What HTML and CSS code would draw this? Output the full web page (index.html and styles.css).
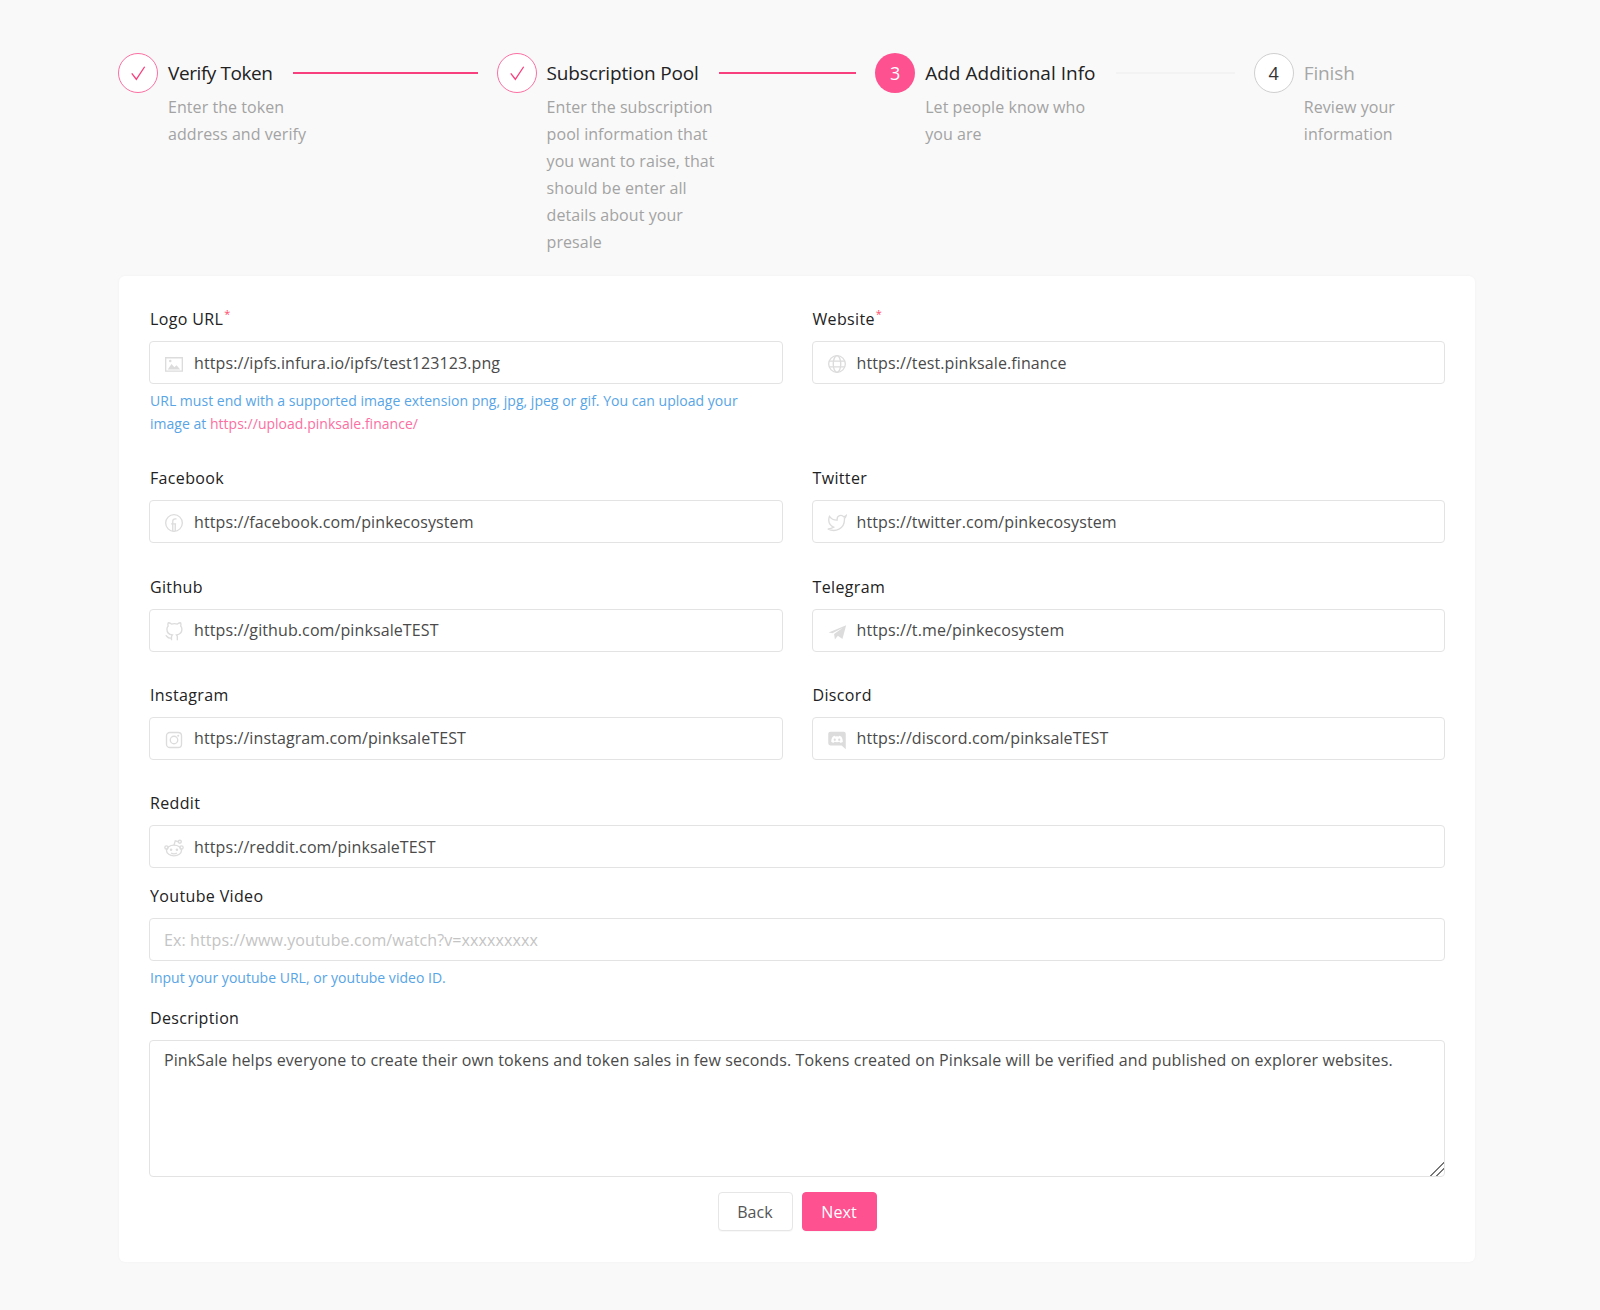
FILE: index.html
```html
<!DOCTYPE html>
<html lang="en">
<head>
<meta charset="utf-8">
<title>Add Additional Info</title>
<link rel="stylesheet" href="styles.css">
</head>
<body>
<main class="page">
  <ol class="steps">
    <li class="step">
      <span class="dot dot-done"><svg viewBox="0 0 24 24" class="check"><path d="M4.5 12.5 10 19.5 20 4.5"/></svg></span>
      <div class="step-body">
        <div class="step-head"><span class="step-title title-tight">Verify Token</span><span class="step-line on"></span></div>
        <p class="step-desc">Enter the token<br>address and verify</p>
      </div>
    </li>
    <li class="step">
      <span class="dot dot-done"><svg viewBox="0 0 24 24" class="check"><path d="M4.5 12.5 10 19.5 20 4.5"/></svg></span>
      <div class="step-body">
        <div class="step-head"><span class="step-title">Subscription Pool</span><span class="step-line on"></span></div>
        <p class="step-desc">Enter the subscription<br>pool information that<br>you want to raise, that<br>should be enter all<br>details about your<br>presale</p>
      </div>
    </li>
    <li class="step">
      <span class="dot dot-active">3</span>
      <div class="step-body">
        <div class="step-head"><span class="step-title title-wide">Add Additional Info</span><span class="step-line"></span></div>
        <p class="step-desc">Let people know who<br>you are</p>
      </div>
    </li>
    <li class="step step-last">
      <span class="dot dot-wait">4</span>
      <div class="step-body">
        <div class="step-head"><span class="step-title muted">Finish</span></div>
        <p class="step-desc">Review your<br>information</p>
      </div>
    </li>
  </ol>

  <form class="card">
    <div class="grid">
      <div class="field">
        <label class="label">Logo URL<sup class="req">*</sup></label>
        <div class="input-wrap">
          <svg class="ico" viewBox="0 0 24 24"><path class="ln" d="M2 4.5h20v16H2z"/><path class="fl" d="M4.5 18.5 9 12l3.5 4 2.500-2.500 4.500 5z"/><circle class="fl" cx="7.500" cy="8.500" r="1.500"/></svg>
          <input class="input" value="https://ipfs.infura.io/ipfs/test123123.png">
        </div>
        <p class="help">URL must end with a supported image extension png, jpg, jpeg or gif. You can upload your image at <a class="link" href="#">https://upload.pinksale.finance/</a></p>
      </div>
      <div class="field">
        <label class="label">Website<sup class="req">*</sup></label>
        <div class="input-wrap">
          <svg class="ico" viewBox="0 0 24 24"><g class="ln"><circle cx="12" cy="12" r="10"/><ellipse cx="12" cy="12" rx="4.500" ry="10"/><path d="M2.500 8.500h19M2.500 15.500h19"/></g></svg>
          <input class="input" value="https://test.pinksale.finance">
        </div>
      </div>
      <div class="field">
        <label class="label">Facebook</label>
        <div class="input-wrap">
          <svg class="ico" viewBox="0 0 24 24"><g class="ln"><circle cx="12" cy="12" r="10"/><path d="M10.500 22v-9H8.500M10.500 13v-3c0-2 1-3 3-3h1.500M10.500 13h4M13.500 13v8.500"/></g></svg>
          <input class="input" value="https://facebook.com/pinkecosystem">
        </div>
      </div>
      <div class="field">
        <label class="label">Twitter</label>
        <div class="input-wrap">
          <svg class="ico" viewBox="0 0 24 24"><path class="ln" d="M23 3a10.900 10.900 0 0 1-3 1.530 4.480 4.480 0 0 0-7.860 3v1A10.660 10.660 0 0 1 3 4s-4 9 5 13a11.640 11.640 0 0 1-7 2c9 5 20 0 20-11.500a4.500 4.500 0 0 0-.08-.83A7.720 7.720 0 0 0 23 3z"/></svg>
          <input class="input" value="https://twitter.com/pinkecosystem">
        </div>
      </div>
      <div class="field">
        <label class="label">Github</label>
        <div class="input-wrap">
          <svg class="ico" viewBox="0 0 24 24"><path class="ln" d="M9 19c-5 1.500-5-2.500-7-3m14 6v-3.870a3.370 3.370 0 0 0-.94-2.610c3.140-.35 6.440-1.540 6.440-7A5.440 5.440 0 0 0 20 4.770 5.070 5.070 0 0 0 19.910 1S18.730.65 16 2.480a13.380 13.380 0 0 0-7 0C6.270.65 5.090 1 5.090 1A5.070 5.070 0 0 0 5 4.770a5.440 5.440 0 0 0-1.500 3.780c0 5.420 3.300 6.610 6.440 7A3.370 3.370 0 0 0 9 18.130V22"/></svg>
          <input class="input" value="https://github.com/pinksaleTEST">
        </div>
      </div>
      <div class="field">
        <label class="label">Telegram</label>
        <div class="input-wrap">
          <svg class="ico" viewBox="0 0 24 24"><path class="fl" d="M2 12.500 23 4l-4.500 16.500-5.500-4-3.500 4.500-1-6.500L19 7 6.500 13.500z"/></svg>
          <input class="input" value="https://t.me/pinkecosystem">
        </div>
      </div>
      <div class="field">
        <label class="label">Instagram</label>
        <div class="input-wrap">
          <svg class="ico" viewBox="0 0 24 24"><g class="ln"><rect x="3" y="3" width="18" height="18" rx="4"/><circle cx="12" cy="12" r="4.500"/></g><circle class="fl" cx="17" cy="7" r="1.200"/></svg>
          <input class="input" value="https://instagram.com/pinksaleTEST">
        </div>
      </div>
      <div class="field">
        <label class="label">Discord</label>
        <div class="input-wrap">
          <svg class="ico" viewBox="0 0 24 24"><path class="fl" fill-rule="evenodd" d="M4 2h16a2.500 2.500 0 0 1 2.500 2.500V23l-5-4.500H4A2.500 2.500 0 0 1 1.500 16V4.500A2.500 2.500 0 0 1 4 2zM9.500 7C8 7.200 7 7.800 6.500 8.300 5.500 10 5 12 5 14c.8.900 2 1.300 3.200 1.300l.8-1.200c1.900.8 4.100.8 6 0l.8 1.200c1.200 0 2.400-.4 3.200-1.300 0-2-.5-4-1.500-5.700C17 7.800 16 7.200 14.500 7l-.4.800a8 8 0 0 0-4.200 0zM9.300 10.200a1.300 1.400 0 1 1 0 2.800 1.300 1.400 0 0 1 0-2.800zm5.400 0a1.300 1.400 0 1 1 0 2.800 1.300 1.400 0 0 1 0-2.800z"/></svg>
          <input class="input" value="https://discord.com/pinksaleTEST">
        </div>
      </div>
      <div class="field field-wide field-tight">
        <label class="label">Reddit</label>
        <div class="input-wrap">
          <svg class="ico" viewBox="0 0 24 24"><g class="ln"><ellipse cx="12" cy="15" rx="9" ry="6.500"/><circle cx="3" cy="11.500" r="2"/><circle cx="21" cy="11.500" r="2"/><circle cx="19" cy="4.500" r="1.800"/><path d="M12 8.500 13.500 3.500l4 1M8.500 18c2 1.200 5 1.200 7 0"/></g><circle class="fl" cx="8.500" cy="14" r="1.500"/><circle class="fl" cx="15.500" cy="14" r="1.500"/></svg>
          <input class="input" value="https://reddit.com/pinksaleTEST">
        </div>
      </div>
      <div class="field field-wide field-tight">
        <label class="label">Youtube Video</label>
        <div class="input-wrap">
          <input class="input" placeholder="Ex: https://www.youtube.com/watch?v=xxxxxxxxx">
        </div>
        <p class="help help-low">Input your youtube URL, or youtube video ID.</p>
      </div>
      <div class="field field-wide field-tight">
        <label class="label">Description</label>
        <textarea class="area">PinkSale helps everyone to create their own tokens and token sales in few seconds. Tokens created on Pinksale will be verified and published on explorer websites.</textarea>
      </div>
    </div>
    <div class="actions">
      <button type="button" class="btn">Back</button>
      <button type="button" class="btn btn-primary">Next</button>
    </div>
  </form>
</main>
</body>
</html>
```

FILE: styles.css
```css
* { box-sizing: border-box; }

html, body {
  margin: 0;
  background: #f9f9f9;
}

body {
  font-family: "Open Sans", "Noto Sans", sans-serif;
  font-size: 16px;
  color: #222;
  letter-spacing: 0.1px;
}

.page {
  width: 1356px;
  margin: 0 0 0 119px;
  padding-top: 53px;
  min-height: 1310px;
}

/* Steps */
.steps {
  display: flex;
  list-style: none;
  margin: 0 0 0 -1px;
  padding: 0;
  height: 223px;
}

.step {
  display: flex;
  width: 378.6px;
  gap: 10px;
}

.step-last {
  width: 219px;
}

.step-body {
  flex: 1;
}

.step-head {
  display: flex;
  align-items: center;
  height: 40px;
}

.step-title {
  font-size: 19px;
  letter-spacing: -0.15px;
  color: #222;
  white-space: nowrap;
}

.title-tight {
  letter-spacing: -0.42px;
}

.title-wide {
  letter-spacing: 0.02px;
}

.step-title.muted {
  color: #a6a6a6;
}

.step-line {
  flex: 1;
  height: 2px;
  margin: 0 19px 0 20px;
  background: #f3f3f3;
}

.step-line.on {
  background: #f9407f;
}

.step-desc {
  margin: 1px 0 0;
  font-size: 16px;
  line-height: 27px;
  letter-spacing: 0.06px;
  color: #a3a3a3;
}

.dot {
  flex: none;
  display: flex;
  align-items: center;
  justify-content: center;
  width: 40px;
  height: 40px;
  border-radius: 50%;
  font-size: 18px;
}

.dot-done {
  background: #fff;
  border: 1px solid #fb6fa2;
}

.dot-active {
  background: #fd5190;
  color: #fff;
}

.dot-wait {
  background: #fff;
  border: 1px solid #cfcfcf;
  color: #333;
}

.check {
  width: 20px;
  height: 20px;
  fill: none;
  stroke: #f9407f;
  stroke-width: 1.600;
}

/* Card */
.card {
  background: #fff;
  border-radius: 6px;
  padding: 30px 30px 31px;
  box-shadow: 0 0 3px rgba(0, 0, 0, 0.04);
}

.grid {
  display: grid;
  grid-template-columns: 1fr 1fr;
  column-gap: 29px;
}

.field {
  margin-bottom: 30.3px;
  min-width: 0;
}

.field-wide {
  grid-column: 1 / -1;
}

.field-tight {
  margin-bottom: 15px;
}

.label {
  display: block;
  height: 26px;
  margin-bottom: 9px;
  padding-left: 1px;
  line-height: 26px;
  font-size: 16px;
  font-weight: 500;
  letter-spacing: 0.35px;
  color: #222;
}

.req {
  color: #ff4d6a;
  font-size: 11px;
  line-height: 0;
  vertical-align: 7px;
  margin-left: 1px;
}

.input-wrap {
  display: flex;
  align-items: center;
  gap: 10px;
  height: 43px;
  padding: 0 14px;
  background: #fff;
  border: 1px solid #e3e3e3;
  border-radius: 4px;
}

.ico {
  flex: none;
  width: 20px;
  height: 20px;
  margin-top: 3px;
}

.ln {
  fill: none;
  stroke: #dcdcdc;
  stroke-width: 1.600;
}

.fl {
  fill: #dcdcdc;
}

.input {
  flex: 1;
  min-width: 0;
  border: 0;
  outline: 0;
  padding: 0;
  background: transparent;
  font: inherit;
  letter-spacing: inherit;
  color: #4a4a4a;
}

.input::placeholder {
  color: #c4c4c4;
  opacity: 1;
}

.help {
  max-width: 610px;
  margin: 5px 0 0;
  padding-left: 1px;
  font-size: 14px;
  line-height: 23px;
  letter-spacing: 0.02px;
  color: #58a5e6;
}

.help-low {
  margin-bottom: 1px;
}

.link {
  color: #fb6fa2;
  text-decoration: none;
}

.area {
  display: block;
  width: 100%;
  height: 137px;
  padding: 7px 14px;
  background: #fff;
  border: 1px solid #e3e3e3;
  border-radius: 4px;
  outline: 0;
  font: inherit;
  letter-spacing: inherit;
  line-height: 24px;
  color: #4a4a4a;
  resize: vertical;
}

.area::-webkit-resizer {
  background: linear-gradient(135deg,
    transparent 52%, #777 52%, #777 57%, transparent 57%,
    transparent 72%, #777 72%, #777 77%, transparent 77%);
}

.actions {
  display: flex;
  justify-content: center;
  gap: 9px;
}

.btn {
  width: 75px;
  height: 39px;
  background: #fff;
  border: 1px solid #e6e6e6;
  border-radius: 4px;
  box-shadow: 0 1px 1px rgba(0, 0, 0, 0.03);
  font: inherit;
  letter-spacing: inherit;
  color: #555;
}

.btn-primary {
  background: #fd5190;
  border-color: #fd5190;
  color: #fff;
}
```
